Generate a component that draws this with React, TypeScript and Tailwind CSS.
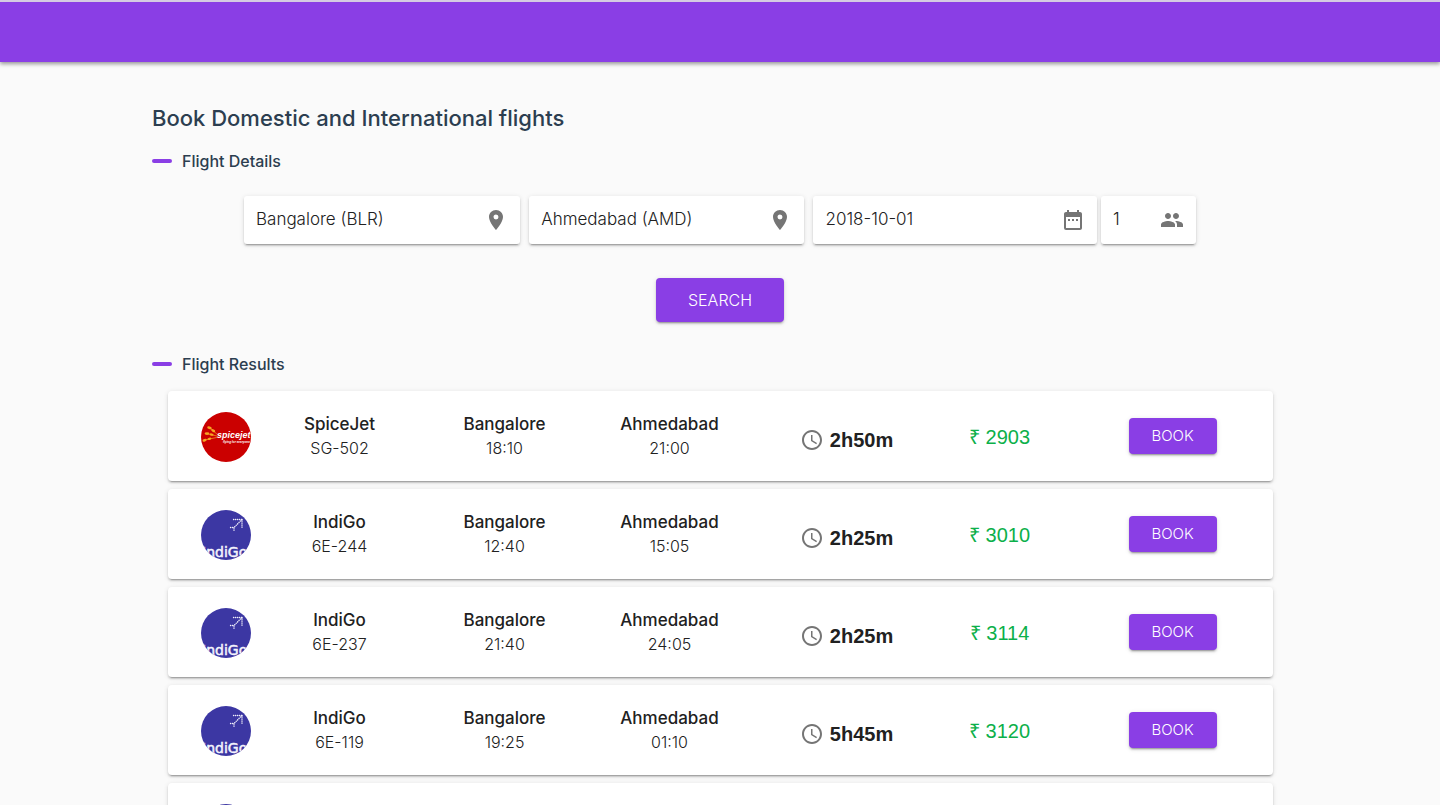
import type { ReactNode } from "react";
import { MdAccessTime, MdDateRange, MdPeople, MdPlace } from "react-icons/md";

type Airline = "SpiceJet" | "IndiGo";

interface Flight {
  airline: Airline;
  code: string;
  from: string;
  departs: string;
  to: string;
  arrives: string;
  duration: string;
  price: number;
}

const flights: Flight[] = [
  { airline: "SpiceJet", code: "SG-502", from: "Bangalore", departs: "18:10", to: "Ahmedabad", arrives: "21:00", duration: "2h50m", price: 2903 },
  { airline: "IndiGo", code: "6E-244", from: "Bangalore", departs: "12:40", to: "Ahmedabad", arrives: "15:05", duration: "2h25m", price: 3010 },
  { airline: "IndiGo", code: "6E-237", from: "Bangalore", departs: "21:40", to: "Ahmedabad", arrives: "24:05", duration: "2h25m", price: 3114 },
  { airline: "IndiGo", code: "6E-119", from: "Bangalore", departs: "19:25", to: "Ahmedabad", arrives: "01:10", duration: "5h45m", price: 3120 },
];

const cardShadow =
  "shadow-[0_3px_1px_-2px_rgba(0,0,0,0.2),0_2px_2px_0_rgba(0,0,0,0.14),0_1px_5px_0_rgba(0,0,0,0.12)]";

function SpiceJetLogo() {
  return (
    <svg viewBox="0 0 50 50" className="size-[50px] rounded-full" aria-hidden="true">
      <rect width="50" height="50" fill="#cb0000" />
      <path
        d="M9 16 L16.5 22.5 M7 22 L16 24 M4 28 L15.5 25.5"
        stroke="#f08a1c"
        strokeWidth="0.8"
        strokeLinecap="round"
        fill="none"
      />
      <g fill="#f5a623">
        <ellipse cx="8.5" cy="15.8" rx="2.4" ry="1.4" transform="rotate(20 8.5 15.8)" />
        <ellipse cx="12.2" cy="18.6" rx="2.2" ry="1.3" transform="rotate(30 12.2 18.6)" />
        <ellipse cx="6" cy="21.6" rx="2.4" ry="1.4" />
        <ellipse cx="10.6" cy="22.6" rx="2" ry="1.2" transform="rotate(10 10.6 22.6)" />
        <ellipse cx="3.6" cy="28.2" rx="2.2" ry="1.3" transform="rotate(-20 3.6 28.2)" />
        <ellipse cx="8.4" cy="26.8" rx="2" ry="1.2" transform="rotate(-15 8.4 26.8)" />
      </g>
      <text x="16" y="26" fill="#fff" fontFamily="Liberation Sans, sans-serif" fontSize="9" fontWeight="700" fontStyle="italic">spicejet</text>
      <text x="22" y="31" fill="#fff" fontFamily="Liberation Sans, sans-serif" fontSize="3" fontWeight="700" fontStyle="italic">flying for everyone</text>
    </svg>
  );
}

function IndiGoLogo() {
  return (
    <svg viewBox="0 0 50 50" className="size-[50px] rounded-full" aria-hidden="true">
      <rect width="50" height="50" fill="#3c37a3" />
      <g stroke="#f0effa" strokeWidth="1.3" strokeLinecap="round" strokeDasharray="0.3 1.7" fill="none">
        <path d="M32.5 9.5 H41 V18" />
        <path d="M41 9.500 L33 17.500" />
        <path d="M29.5 17.5 H33 V21" />
      </g>
      <text x="1" y="47" fill="#f4f3fc" stroke="#f4f3fc" strokeWidth="0.5" fontFamily="DejaVu Sans, sans-serif" fontSize="14">IndiGo</text>
    </svg>
  );
}

function AirlineLogo({ airline }: { airline: Airline }) {
  return airline === "SpiceJet" ? <SpiceJetLogo /> : <IndiGoLogo />;
}

function SectionHeading({ children }: { children: ReactNode }) {
  return (
    <h2 className="flex items-center gap-[10px] text-base leading-6 font-medium text-[#2c3e50]">
      <span className="h-1 w-5 rounded-sm bg-[#8a3ee5]" />
      {children}
    </h2>
  );
}

interface FieldProps {
  label: string;
  value: string;
  icon: ReactNode;
  className: string;
}

function Field({ label, value, icon, className }: FieldProps) {
  return (
    <label className={`flex h-12 items-center rounded-[3px] bg-white px-3 text-[#757575] ${cardShadow} ${className}`}>
      <span className="sr-only">{label}</span>
      <input
        defaultValue={value}
        className="h-full w-full min-w-0 flex-1 bg-transparent pb-0.5 text-[17px] font-light text-[#212121] outline-none"
      />
      {icon}
    </label>
  );
}

function Stop({ title, detail }: { title: string; detail: string }) {
  return (
    <div className="h-[50px] text-center text-[#212121]">
      <p className="text-[17px] leading-6 font-medium">{title}</p>
      <p className="text-base leading-6 font-light">{detail}</p>
    </div>
  );
}

function FlightCard({ flight }: { flight: Flight }) {
  return (
    <li
      className={`grid h-[90px] grid-cols-[56px_repeat(6,1fr)] items-center rounded bg-white pt-0.5 pr-[26px] pl-[33px] ${cardShadow}`}
    >
      <AirlineLogo airline={flight.airline} />
      <Stop title={flight.airline} detail={flight.code} />
      <Stop title={flight.from} detail={flight.departs} />
      <Stop title={flight.to} detail={flight.arrives} />
      <div className="flex items-center justify-center gap-1.5 pt-1.5 pl-6 font-['Liberation_Sans',Arial,sans-serif] text-xl font-bold text-[#212121]">
        <MdAccessTime className="size-6 text-[#757575]" />
        {flight.duration}
      </div>
      <p className="text-center font-['Liberation_Sans',Arial,sans-serif] text-xl text-[#0cb04a]">
        ₹ {flight.price}
      </p>
      <div className="flex justify-center pb-0.5 pl-4">
        <button type="button" className={`h-9 w-[88px] rounded bg-[#8a3ee5] text-[15px] font-light text-white ${cardShadow}`}>
          BOOK
        </button>
      </div>
    </li>
  );
}

export default function App() {
  return (
    <div className="min-h-screen bg-[#fafafa] font-[Inter,'Noto_Sans',sans-serif]">
      <header className="h-[62px] border-t-2 border-[#d5cbe2] bg-[#8a3ee5] shadow-[0_2px_4px_rgba(0,0,0,0.4)]" />
      <main className="mx-auto max-w-[1136px] pt-10 pb-8">
        <h1 className="text-[22px] leading-8 font-medium text-[#2c3e50]">
          Book Domestic and International flights
        </h1>

        <section className="pt-[15px]">
          <SectionHeading>Flight Details</SectionHeading>
          <form className="pt-[23px]" onSubmit={(event) => event.preventDefault()}>
            <div className="mx-auto flex max-w-[952px]">
              <Field label="From" value="Bangalore (BLR)" icon={<MdPlace className="size-6" />} className="mr-[9px] flex-[276]" />
              <Field label="To" value="Ahmedabad (AMD)" icon={<MdPlace className="size-6" />} className="mr-[9px] flex-[275]" />
              <Field label="Date" value="2018-10-01" icon={<MdDateRange className="size-6" />} className="mr-1 flex-[284]" />
              <Field label="Passengers" value="1" icon={<MdPeople className="size-6" />} className="w-[95px]" />
            </div>
            <div className="flex justify-center pt-[34px]">
              <button type="submit" className={`h-11 w-32 rounded bg-[#8a3ee5] text-base font-light text-white ${cardShadow}`}>
                SEARCH
              </button>
            </div>
          </form>
        </section>

        <section className="pt-[30px]">
          <SectionHeading>Flight Results</SectionHeading>
          <ul className="flex flex-col gap-2 pt-[15px] pr-[15px] pl-4">
            {flights.map((flight) => (
              <FlightCard key={flight.code} flight={flight} />
            ))}
            <li className={`flex h-[90px] items-center rounded bg-white pt-0.5 pl-[33px] ${cardShadow}`}>
              <AirlineLogo airline="IndiGo" />
            </li>
          </ul>
        </section>
      </main>
    </div>
  );
}
